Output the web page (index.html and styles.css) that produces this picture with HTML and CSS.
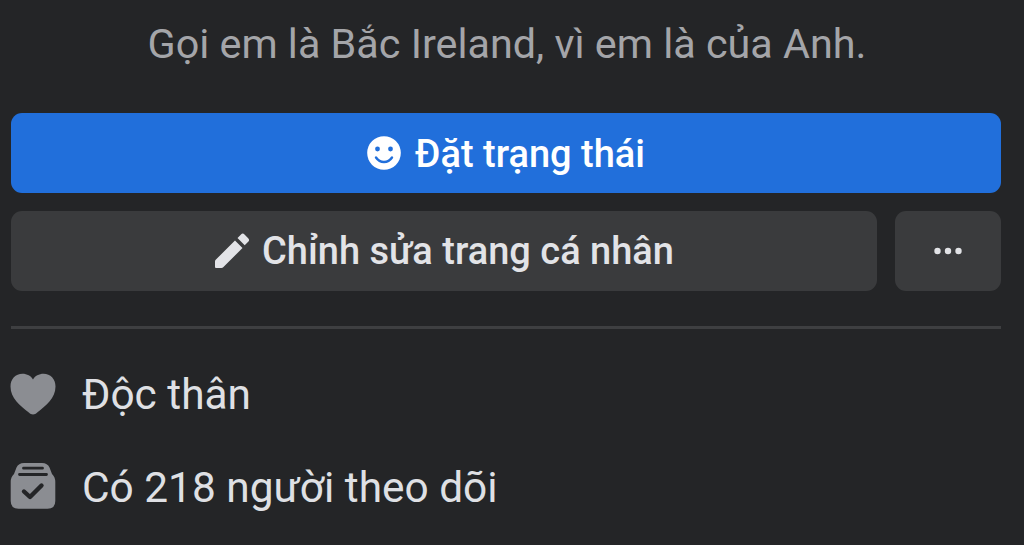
FILE: index.html
```html
<!DOCTYPE html>
<html lang="vi">
<head>
    <meta charset="UTF-8">
    <meta name="viewport" content="width=device-width, initial-scale=1.0">
    <title>Trang cá nhân</title>
    <link rel="stylesheet" href="styles.css">
</head>
<body>
    <div class="profile">
        <p class="bio">Gọi em là Bắc Ireland, vì em là của Anh.</p>

        <!-- Action Buttons -->
        <div class="actions">
            <button class="btn btn-primary">
                <svg class="icon-smile" viewBox="0 0 34 34">
                    <circle cx="17" cy="17" r="16.8" fill="#fff"/>
                    <circle cx="10.5" cy="13" r="2.4" fill="#216fdb"/>
                    <circle cx="23.5" cy="13" r="2.4" fill="#216fdb"/>
                    <path d="M9 21.5c2 3 4.7 4.500 8 4.500s6-1.500 8-4.500" fill="none" stroke="#216fdb" stroke-width="2.4" stroke-linecap="round"/>
                </svg>
                <span>Đặt trạng thái</span>
            </button>
            <div class="action-row">
                <button class="btn btn-edit">
                    <svg class="icon-pencil" viewBox="0 0 36 36">
                        <path d="M1 34V28.500Q1 27.500 1.700 26.800L21 7.500L28.500 15L9.200 34.300Q8.500 35 7.500 35H2Q1 35 1 34z"/>
                        <path d="M23.500 5L27 1.500Q28.800-0.300 30.500 1.500L34.200 5.200Q36 7 34.200 8.800L30.700 12.300z"/>
                    </svg>
                    <span>Chỉnh sửa trang cá nhân</span>
                </button>
                <button class="btn btn-more" aria-label="Xem thêm">
                    <svg class="icon-dots" viewBox="0 0 30 8">
                        <circle cx="4.500" cy="4" r="3.200"/>
                        <circle cx="15" cy="4" r="3.200"/>
                        <circle cx="25.500" cy="4" r="3.200"/>
                    </svg>
                </button>
            </div>
        </div>

        <!-- Intro -->
        <ul class="intro">
            <li>
                <svg class="icon-intro" viewBox="0 0 46 46">
                    <path d="M23 43.500C21.500 43.500 20 42.500 18.500 41.200C10 34.500 0.500 27 0.500 15.500C0.500 8 5.500 2.800 12.500 2.800C17 2.800 21 5 23 8.500C25 5 29 2.800 33.500 2.800C40.500 2.800 45.500 8 45.500 15.500C45.500 27 36 34.500 27.500 41.200C26 42.500 24.500 43.500 23 43.500z"/>
                </svg>
                <span>Độc thân</span>
            </li>
            <li>
                <svg class="icon-intro icon-followers" viewBox="0 0 46 46">
                    <path d="M14 0H32Q37.500 0 39.500 4.500L42 11Q45.300 14 45.300 19V38Q45.300 45.800 37.500 45.800H8.500Q0.700 45.800 0.700 38V19Q0.700 14 4 11L6.500 4.500Q8.500 0 14 0z"/>
                    <path class="line" d="M13.500 5.200H32.500M9.500 11.500H36.500"/>
                    <path class="check" d="M14 28.500L20 34L31.500 22.500"/>
                </svg>
                <span>Có 218 người theo dõi</span>
            </li>
        </ul>
    </div>
</body>
</html>
```
FILE: styles.css
```css
body {
    margin: 0;
    background: #242527;
    color: #dfe0e4;
    font-family: Roboto, sans-serif;
}

.profile {
    padding: 20px 23px 0 11px;
}

.bio {
    margin: 0 0 45px;
    padding-left: 2px;
    text-align: center;
    color: #a4a5a9;
    font-size: 41.3px;
    line-height: 48px;
}

.actions {
    padding-bottom: 35px;
    border-bottom: 3px solid #3e3f41;
}

.btn {
    display: flex;
    align-items: center;
    justify-content: center;
    height: 80px;
    padding: 0;
    border: none;
    border-radius: 11px;
    background: #3a3b3d;
    color: #e2e3e7;
    font-family: inherit;
    font-size: 38px;
    font-weight: 500;
}

.btn-primary {
    width: 100%;
    gap: 14px;
    background: #216fdb;
    color: #fff;
}

.btn-primary span {
    padding-top: 2px;
}

.action-row {
    display: flex;
    gap: 18px;
    margin-top: 18px;
}

.btn-edit {
    flex: 1;
    gap: 12px;
}

.btn-more {
    width: 106px;
}

.icon-smile {
    width: 34px;
    height: 34px;
}

.icon-pencil {
    width: 36px;
    height: 36px;
    fill: #e2e3e7;
}

.icon-dots {
    width: 30px;
    height: 8px;
    fill: #e2e3e7;
}

.intro {
    margin: 0;
    padding: 41px 0 0;
    list-style: none;
}

.intro li {
    display: flex;
    align-items: center;
    gap: 26px;
    height: 48px;
    margin: 0 0 45px -1px;
    font-size: 42.4px;
}

.icon-intro {
    width: 46px;
    height: 46px;
    fill: #8b8d92;
}

.icon-followers {
    margin-bottom: 3px;
}

.icon-intro .line {
    fill: none;
    stroke: #242527;
    stroke-width: 2.8;
    stroke-linecap: round;
}

.icon-intro .check {
    fill: none;
    stroke: #242527;
    stroke-width: 4.4;
    stroke-linecap: round;
    stroke-linejoin: round;
}
```
